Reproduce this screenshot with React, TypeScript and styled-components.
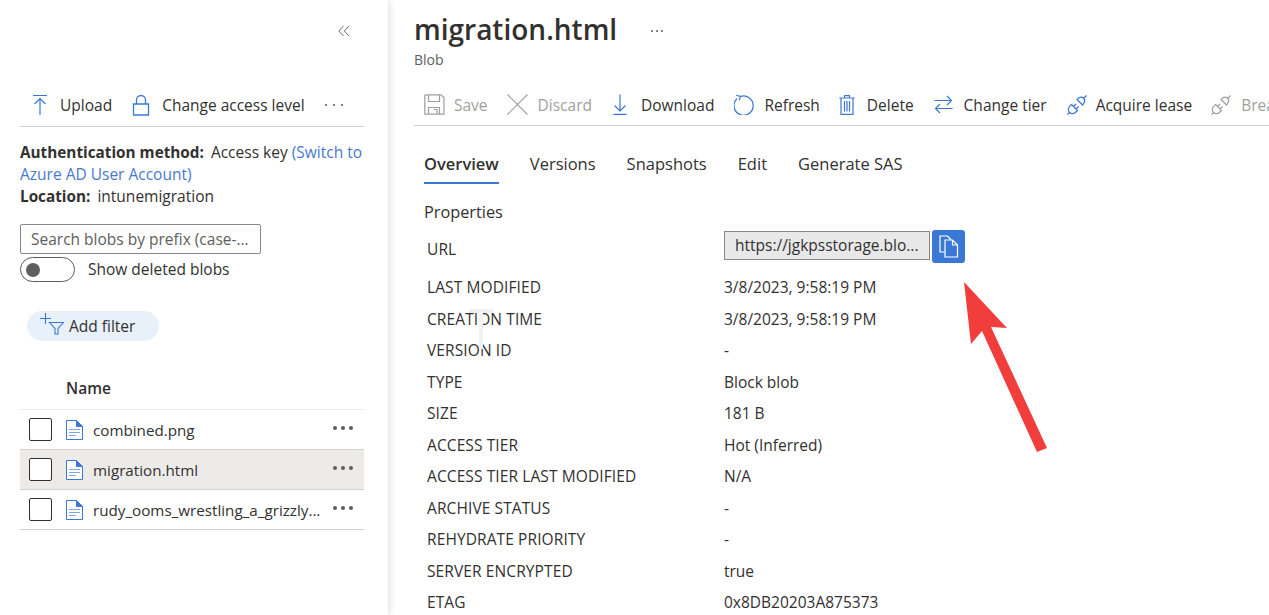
import React from "react";
import styled, { createGlobalStyle } from "styled-components";

const GlobalStyle = createGlobalStyle`
	html, body {
		margin: 0;
		padding: 0;
		height: 100%;
		overflow: hidden;
		background: #fff;
	}
	body {
		font-family: "Open Sans", "Noto Sans", "Liberation Sans", sans-serif;
		font-size: 15.5px;
		color: #323130;
	}
`;

const blue = "#3a78d6";
const grey = "#a19f9d";

type IconProps = { color?: string };

const UploadIcon = () => (
	<svg width="16" height="22" viewBox="0 0 16 22" fill="none" stroke={blue} strokeWidth="1.2">
		<path d="M1 1.5h14M8 21V4.5M2.5 10L8 4.5l5.5 5.5" />
	</svg>
);
const LockIcon = () => (
	<svg width="18" height="22" viewBox="0 0 18 22" fill="none" stroke={blue} strokeWidth="1.3">
		<path d="M1.5 10h15v11h-15zM4.5 10V6a4.5 4.5 0 0 1 9 0v4" />
	</svg>
);
const ChevronsIcon = () => (
	<svg width="12" height="12" viewBox="0 0 12 12" fill="none" stroke="#605e5c" strokeWidth="0.9">
		<path d="M5.5 1L.8 6l4.7 5M11 1L6.3 6l4.7 5" />
	</svg>
);
const FileIcon = () => (
	<svg width="17" height="20" viewBox="0 0 17 20" fill="none">
		<path d="M.5.5h10l6 6v13H.5z" fill="#fff" stroke={blue} />
		<path d="M10.5.5v6h6z" fill={blue} stroke={blue} />
		<path d="M3 9.5h11M3 12.5h11M3 15.5h7" stroke="#7fa8e6" strokeWidth="1.2" />
	</svg>
);
const AddFilterIcon = () => (
	<svg width="24" height="22" viewBox="0 0 24 22" fill="none" stroke={blue} strokeWidth="1.1">
		<path d="M0 5.5h11M5.5 0v11" />
		<path d="M9.5 9.5h14l-5.5 6v5.5h-3v-5.5z" />
	</svg>
);
const SaveIcon = ({ color = grey }: IconProps) => (
	<svg width="21" height="21" viewBox="0 0 21 21" fill="none" stroke={color} strokeWidth="1.2">
		<path d="M1.5.8h15.5l3 3v16.4H.8V1.5z" />
		<path d="M4.5 1v6.5h11V1M4.5 20v-6.5h11V20M10 15.5h3V20" />
	</svg>
);
const DiscardIcon = () => (
	<svg width="21" height="21" viewBox="0 0 21 21" fill="none" stroke={grey} strokeWidth="1.1">
		<path d="M.5.5l20 20M20.5.5l-20 20" />
	</svg>
);
const DownloadIcon = () => (
	<svg width="14" height="21" viewBox="0 0 14 21" fill="none" stroke={blue} strokeWidth="1.2">
		<path d="M7 .5v16M1.5 11.5L7 17l5.5-5.5M.5 20.3h13" />
	</svg>
);
const RefreshIcon = () => (
	<svg width="21" height="21" viewBox="0 0 21 21" fill="none" stroke={blue} strokeWidth="1.2">
		<path d="M6.2 2.6A9.6 9.6 0 1 1 3 4.6M2.2 1.2L6.5 2.5 5 6.4" />
	</svg>
);
const TrashIcon = () => (
	<svg width="16" height="20" viewBox="0 0 16 20" fill="none" stroke={blue} strokeWidth="1.2">
		<path d="M.3 3h15.4M5.5 3V.7h5V3M2 3v16.3h12V3M5.5 6v10.5M8 6v10.5M10.5 6v10.5" />
	</svg>
);
const SwapIcon = () => (
	<svg width="19" height="19" viewBox="0 0 19 19" fill="none" stroke={blue} strokeWidth="1.2">
		<path d="M.5 5.5h17M13 1l4.5 4.5L13 10M18.5 13.5H1.5M6 9l-4.5 4.5L6 18" />
	</svg>
);
const PlugIcon = ({ color = blue }: IconProps) => (
	<svg width="20" height="20" viewBox="0 0 20 20" fill="none" stroke={color} strokeWidth="1.2">
		<path d="M10 4.5l5.5 5.5 1.5-2.2a3.6 3.6 0 0 0-5-5zM16.5 3.5l3-3" />
		<path d="M4.5 9.5l6 6-2.2 2a3.8 3.8 0 0 1-5.8-5.8zM3 17L.5 19.5M6.5 11.5L9 9M9 14l2.5-2.5" />
	</svg>
);
const CopyIcon = () => (
	<svg width="20" height="23" viewBox="0 0 20 23" fill="none" stroke="#fff" strokeWidth="1.2">
		<path d="M1 1h7.5l3 3v13H1z" fill={blue} />
		<path d="M6 5h7.5l5 5v12H6z" fill={blue} />
		<path d="M13.5 5v5h5" />
	</svg>
);

const Page = styled.div`
	position: relative;
	display: flex;
	width: 1269px;
	height: 615px;
	overflow: hidden;
`;

const Sidebar = styled.aside`
	flex: none;
	box-sizing: border-box;
	width: 388px;
	height: 615px;
	padding: 0 24px 0 20px;
	box-shadow: 1px 0 8px rgba(0, 0, 0, 0.14);
	background: #fff;
`;

const CollapseRow = styled.div`
	display: flex;
	justify-content: flex-end;
	align-items: center;
	height: 62px;
	padding-right: 14px;
`;

const SideToolbar = styled.div`
	display: flex;
	align-items: center;
	height: 65px;
	padding: 22px 0 0 12px;
	box-sizing: border-box;
	border-bottom: 1px solid #d2d0ce;
`;

const ToolButton = styled.div<{ $disabled?: boolean; $gap?: number; $left?: number }>`
	display: flex;
	flex: none;
	align-items: center;
	gap: ${({ $gap }) => $gap ?? 12}px;
	margin-left: ${({ $left }) => $left ?? 0}px;
	color: ${({ $disabled }) => ($disabled ? grey : "#323130")};
	white-space: nowrap;
`;

const MoreDots = styled.span<{ $left?: number; $size?: number; $color?: string; $spacing?: number }>`
	display: inline-flex;
	gap: ${({ $spacing }) => $spacing ?? 6}px;
	margin-left: ${({ $left }) => $left ?? 0}px;

	i {
		display: block;
		width: ${({ $size }) => $size ?? 2}px;
		height: ${({ $size }) => $size ?? 2}px;
		border-radius: 50%;
		background: ${({ $color }) => $color ?? "#605e5c"};
	}
`;

const Dots = (props: { $left?: number; $size?: number; $color?: string; $spacing?: number }) => (
	<MoreDots {...props}>
		<i />
		<i />
		<i />
	</MoreDots>
);

const AuthBlock = styled.div`
	margin-top: 14px;
`;

const AuthLine = styled.div`
	line-height: 22px;
	white-space: nowrap;
`;

const AuthLabel = styled.b`
	font-size: 15.3px;
	font-weight: 700;
	margin-right: 7px;
`;

const BlueText = styled.span`
	color: #4a78d0;
`;

const SearchBox = styled.div`
	box-sizing: border-box;
	width: 241px;
	height: 30px;
	margin-top: 17px;
	padding-left: 10px;
	border: 1px solid #8a8886;
	border-radius: 2px;
	color: #605e5c;
	line-height: 28px;
	white-space: nowrap;
`;

const ToggleRow = styled.div`
	display: flex;
	align-items: center;
	gap: 13px;
	margin-top: 3px;
	height: 25px;
`;

const ToggleLabel = styled.span`
	margin-bottom: 2px;
`;

const Toggle = styled.div`
	box-sizing: border-box;
	display: flex;
	align-items: center;
	width: 55px;
	height: 25px;
	padding-left: 5px;
	border: 1px solid #605e5c;
	border-radius: 13px;

	&::before {
		content: "";
		width: 14px;
		height: 14px;
		border-radius: 50%;
		background: #605e5c;
	}
`;

const FilterPill = styled.div`
	display: inline-flex;
	align-items: center;
	gap: 5px;
	box-sizing: border-box;
	width: 132px;
	height: 30px;
	margin: 29px 0 0 7px;
	padding-left: 13px;
	border-radius: 15px;
	background: #e8f0fa;

	svg {
		margin-top: -4px;
	}
`;

const NameHeader = styled.div`
	box-sizing: border-box;
	height: 69px;
	padding: 37px 0 0 46px;
	font-weight: 600;
	line-height: 20px;
	border-bottom: 1px solid #edebe9;
`;

const BlobRow = styled.div<{ $selected?: boolean }>`
	display: flex;
	align-items: center;
	box-sizing: border-box;
	height: 40px;
	padding: 0 11px 0 9px;
	border-bottom: 1px solid #d2d0ce;
	background: ${({ $selected }) => ($selected ? "#edebe9" : "transparent")};

	${MoreDots} {
		margin-bottom: 4px;
	}
`;

const Checkbox = styled.div`
	flex: none;
	box-sizing: border-box;
	width: 23px;
	height: 23px;
	border: 1px solid #323130;
	border-radius: 2px;
	background: #fff;
`;

const BlobFile = styled.div`
	display: flex;
	flex: 1;
	min-width: 0;
	align-items: center;
	gap: 10px;
	margin-left: 14px;
`;

const BlobName = styled.span`
	padding-top: 1.5px;
	font-size: 15.2px;
	white-space: nowrap;
`;

const Main = styled.main`
	flex: 1;
	min-width: 0;
	padding-left: 26px;
	overflow: hidden;
`;

const TitleRow = styled.div`
	display: flex;
	align-items: center;
	height: 46px;
	padding-top: 12px;
	box-sizing: border-box;

	${MoreDots} {
		margin-top: 4px;
	}
`;

const Title = styled.h1`
	margin: 0;
	font-size: 28px;
	font-weight: 600;
	line-height: 38px;
`;

const Subtitle = styled.div`
	font-size: 14px;
	line-height: 20px;
	margin-top: 4px;
	color: #605e5c;
`;

const MainToolbar = styled.div`
	display: flex;
	align-items: center;
	height: 56px;
	padding: 14px 0 0 10px;
	box-sizing: border-box;
	border-bottom: 1px solid #d2d0ce;
	overflow: hidden;
`;

const Tabs = styled.nav`
	display: flex;
	gap: 31px;
	padding-left: 10px;
	margin-top: 23px;
`;

const Tab = styled.div<{ $active?: boolean }>`
	height: 35px;
	line-height: 30px;
	box-sizing: border-box;
	font-size: 16.5px;
	font-weight: ${({ $active }) => ($active ? 600 : 400)};
	border-bottom: ${({ $active }) => ($active ? `2px solid ${blue}` : "none")};
`;

const SectionTitle = styled.div`
	margin: 17px 0 0 10px;
	font-size: 16.3px;
	line-height: 22px;
`;

const UrlRow = styled.div`
	display: grid;
	grid-template-columns: 297px auto;
	align-items: center;
	height: 40px;
	margin: 6px 0 0 13px;
`;

const UrlGroup = styled.div`
	display: flex;
	align-items: flex-start;
	gap: 2px;
	margin-bottom: 5px;
`;

const UrlField = styled.div`
	box-sizing: border-box;
	width: 206px;
	height: 29px;
	margin-top: 1px;
	padding-left: 10px;
	border: 1px solid #8a8886;
	background: #e8e8e8;
	line-height: 27px;
	white-space: nowrap;
`;

const CopyButton = styled.div`
	display: flex;
	align-items: center;
	justify-content: center;
	width: 33px;
	height: 33px;
	border-radius: 3px;
	background: ${blue};
`;

const PropGrid = styled.dl`
	display: grid;
	grid-template-columns: 297px auto;
	grid-auto-rows: 31.5px;
	align-items: center;
	margin: 2.3px 0 0 13px;
`;

const PropName = styled.dt`
	font-size: 15.5px;
	letter-spacing: 0.1px;
`;

const PropValue = styled.dd`
	margin: 0;
	font-size: 15.5px;
`;

const RedArrow = styled.svg`
	position: absolute;
	left: 960px;
	top: 280px;
`;

const IBeam = styled.svg`
	position: absolute;
	left: 468px;
	top: 308px;
`;

const blobs = [
	{ name: "combined.png" },
	{ name: "migration.html", selected: true },
	{ name: "rudy_ooms_wrestling_a_grizzly..." },
];

const properties: [string, string][] = [
	["LAST MODIFIED", "3/8/2023, 9:58:19 PM"],
	["CREATION TIME", "3/8/2023, 9:58:19 PM"],
	["VERSION ID", "-"],
	["TYPE", "Block blob"],
	["SIZE", "181 B"],
	["ACCESS TIER", "Hot (Inferred)"],
	["ACCESS TIER LAST MODIFIED", "N/A"],
	["ARCHIVE STATUS", "-"],
	["REHYDRATE PRIORITY", "-"],
	["SERVER ENCRYPTED", "true"],
	["ETAG", "0x8DB20203A875373"],
];

export default function App() {
	return (
		<Page>
			<GlobalStyle />
			<Sidebar>
				<CollapseRow>
					<ChevronsIcon />
				</CollapseRow>
				<SideToolbar>
					<ToolButton>
						<UploadIcon />
						Upload
					</ToolButton>
					<ToolButton $left={20}>
						<LockIcon />
						Change access level
					</ToolButton>
					<Dots $left={20} />
				</SideToolbar>
				<AuthBlock>
					<AuthLine>
						<AuthLabel>Authentication method:</AuthLabel>
						Access key <BlueText>(Switch to</BlueText>
					</AuthLine>
					<AuthLine>
						<BlueText>Azure AD User Account)</BlueText>
					</AuthLine>
					<AuthLine>
						<AuthLabel>Location:</AuthLabel>
						intunemigration
					</AuthLine>
				</AuthBlock>
				<SearchBox>Search blobs by prefix (case-...</SearchBox>
				<ToggleRow>
					<Toggle />
					<ToggleLabel>Show deleted blobs</ToggleLabel>
				</ToggleRow>
				<FilterPill>
					<AddFilterIcon />
					Add filter
				</FilterPill>
				<NameHeader>Name</NameHeader>
				{blobs.map((blob) => (
					<BlobRow key={blob.name} $selected={blob.selected}>
						<Checkbox />
						<BlobFile>
							<FileIcon />
							<BlobName>{blob.name}</BlobName>
						</BlobFile>
						<Dots $size={4} $spacing={4} />
					</BlobRow>
				))}
			</Sidebar>
			<Main>
				<TitleRow>
					<Title>migration.html</Title>
					<Dots $left={34} $spacing={3} />
				</TitleRow>
				<Subtitle>Blob</Subtitle>
				<MainToolbar>
					<ToolButton $disabled $gap={9}>
						<SaveIcon />
						Save
					</ToolButton>
					<ToolButton $disabled $left={19} $gap={10}>
						<DiscardIcon />
						Discard
					</ToolButton>
					<ToolButton $left={21} $gap={14}>
						<DownloadIcon />
						Download
					</ToolButton>
					<ToolButton $left={20} $gap={9}>
						<RefreshIcon />
						Refresh
					</ToolButton>
					<ToolButton $left={19} $gap={12}>
						<TrashIcon />
						Delete
					</ToolButton>
					<ToolButton $left={20} $gap={11}>
						<SwapIcon />
						Change tier
					</ToolButton>
					<ToolButton $left={20} $gap={9}>
						<PlugIcon />
						Acquire lease
					</ToolButton>
					<ToolButton $disabled $left={19} $gap={10}>
						<PlugIcon color={grey} />
						Break lease
					</ToolButton>
				</MainToolbar>
				<Tabs>
					<Tab $active>Overview</Tab>
					<Tab>Versions</Tab>
					<Tab>Snapshots</Tab>
					<Tab>Edit</Tab>
					<Tab>Generate SAS</Tab>
				</Tabs>
				<SectionTitle>Properties</SectionTitle>
				<UrlRow>
					<PropName>URL</PropName>
					<UrlGroup>
						<UrlField>https://jgkpsstorage.blo...</UrlField>
						<CopyButton>
							<CopyIcon />
						</CopyButton>
					</UrlGroup>
				</UrlRow>
				<PropGrid>
					{properties.map(([name, value]) => (
						<React.Fragment key={name}>
							<PropName>{name}</PropName>
							<PropValue>{value}</PropValue>
						</React.Fragment>
					))}
				</PropGrid>
			</Main>
			<IBeam width="26" height="46" viewBox="0 0 26 46" fill="none" stroke="#f2f2f2" strokeWidth="4">
				<path d="M1 3h24M13 3v38" />
			</IBeam>
			<RedArrow width="90" height="176" viewBox="0 0 90 176">
				<path d="M4 2L47 48 31 47 87 168l-10 4L22 51 11 64z" fill="#f23d3d" />
			</RedArrow>
		</Page>
	);
}
